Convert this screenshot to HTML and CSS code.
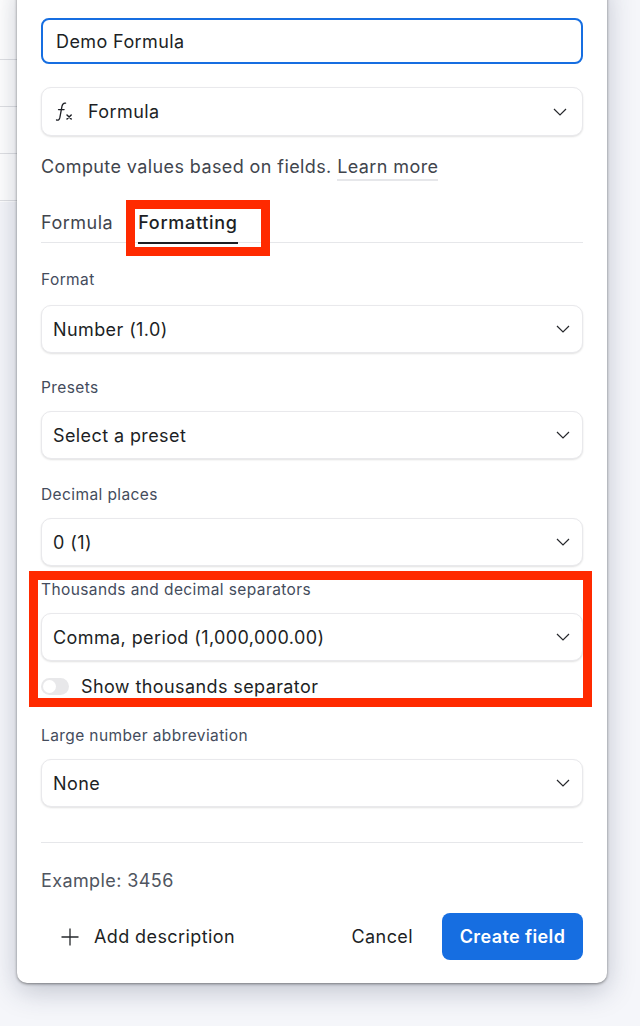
FILE: index.html
```html
<!DOCTYPE html>
<html lang="en">
<head>
<meta charset="utf-8">
<title>Create field</title>
<link rel="stylesheet" href="styles.css">
</head>
<body>
<div class="backdrop">
  <div class="bg-row"></div>
  <div class="bg-row"></div>
  <div class="bg-row"></div>
  <div class="bg-row"></div>
</div>
<div class="panel">
  <div class="name-input">Demo Formula</div>
  <div class="select type-select">
    <span class="type-label">
      <svg class="fx" width="20" height="20" viewBox="0 0 20 20" fill="none" stroke="#1d1f25" stroke-width="1.3" stroke-linecap="round"><path d="M1.5 18c2 .5 2.9-.3 3.4-2.6L7 4.2C7.6 1.6 8.8.8 10.6 1.2M3.5 7.6h5.6"/><path d="M12 13l4.2 4M16.2 13L12 17" stroke-width="1.5"/></svg>
      Formula
    </span>
    <svg class="chev" width="14" height="8" viewBox="0 0 14 8" fill="none"><path d="M1 1L7 7l6-6" stroke="#26282c" stroke-width="1.2"/></svg>
  </div>
  <p class="desc">Compute values based on fields. <span class="learn">Learn more</span></p>
  <div class="tabs">
    <span class="tab">Formula</span>
    <span class="tab active">Formatting</span>
  </div>
  <label class="label first">Format</label>
  <div class="select"><span>Number (1.0)</span><svg class="chev" width="14" height="8" viewBox="0 0 14 8" fill="none"><path d="M1 1L7 7l6-6" stroke="#26282c" stroke-width="1.2"/></svg></div>
  <label class="label presets">Presets</label>
  <div class="select"><span>Select a preset</span><svg class="chev" width="14" height="8" viewBox="0 0 14 8" fill="none"><path d="M1 1L7 7l6-6" stroke="#26282c" stroke-width="1.2"/></svg></div>
  <label class="label">Decimal places</label>
  <div class="select"><span>0 (1)</span><svg class="chev" width="14" height="8" viewBox="0 0 14 8" fill="none"><path d="M1 1L7 7l6-6" stroke="#26282c" stroke-width="1.2"/></svg></div>
  <label class="label tight">Thousands and decimal separators</label>
  <div class="select"><span>Comma, period (1,000,000.00)</span><svg class="chev" width="14" height="8" viewBox="0 0 14 8" fill="none"><path d="M1 1L7 7l6-6" stroke="#26282c" stroke-width="1.2"/></svg></div>
  <div class="toggle-row"><span class="toggle"><span class="knob"></span></span><span>Show thousands separator</span></div>
  <label class="label large">Large number abbreviation</label>
  <div class="select"><span>None</span><svg class="chev" width="14" height="8" viewBox="0 0 14 8" fill="none"><path d="M1 1L7 7l6-6" stroke="#26282c" stroke-width="1.2"/></svg></div>
  <div class="divider"></div>
  <div class="example">Example: 3456</div>
  <div class="footer">
    <span class="add">
      <svg width="18" height="18" viewBox="0 0 18 18" fill="none"><path d="M9 .5v17M.5 9h17" stroke="#26282c" stroke-width="1.3"/></svg>
      Add description
    </span>
    <span class="actions">
      <span class="cancel">Cancel</span>
      <span class="create">Create field</span>
    </span>
  </div>
</div>
<div class="mark mark-tab"></div>
<div class="mark mark-sep"></div>
</body>
</html>
```
FILE: styles.css
```css
* { box-sizing: border-box; }
html, body { margin: 0; padding: 0; }
body {
  position: relative;
  width: 640px;
  height: 1026px;
  overflow: hidden;
  background: #f5f6fa;
  font-family: Inter, "Liberation Sans", sans-serif;
  font-size: 18px;
  letter-spacing: .4px;
  color: #1d1f25;
}
.backdrop { width: 17px; padding-top: 13px; background: #fff; height: 202px; }
.bg-row { height: 47px; border-bottom: 1px solid #dfe0e3; }
.panel {
  position: absolute;
  left: 17px;
  top: -20px;
  width: 590px;
  padding: 38px 24px 23px 24px;
  background: #fff;
  border-radius: 0 0 10px 10px;
  box-shadow: 0 1px 3px rgba(0,0,0,.45), 0 8px 28px rgba(40,50,80,.26);
}
.name-input {
  height: 46px;
  padding-left: 13px;
  display: flex;
  align-items: center;
  border: 2px solid #166ee1;
  border-radius: 8px;
}
.select {
  height: 48px;
  padding: 0 12px 0 11px;
  display: flex;
  align-items: center;
  justify-content: space-between;
  background: #fff;
  border-radius: 10px;
  border: 1px solid #e9e9ec;
  box-shadow: 0 1px 2px rgba(0,0,0,.12);
}
.type-select { margin-top: 23px; height: 49px; padding-right: 15px; padding-left: 12px; }
.type-label { display: flex; align-items: center; gap: 13px; }
.fx { margin-left: 1px; }
.chev { flex: none; }
.desc { margin: 18px 0 0; height: 26px; line-height: 26px; color: #41454d; }
.learn { display: inline-block; line-height: 25px; border-bottom: 2px solid #e6e7ea; }
.tabs { display: flex; gap: 25px; margin-top: 23px; height: 40px; border-bottom: 1px solid #e6e7ea; padding-top: 7px; }
.tab { color: #41454d; height: 32px; line-height: 26px; letter-spacing: .5px; }
.tab.active { color: #1d1f25; font-weight: 500; letter-spacing: .7px; border-bottom: 2px solid #1d1f25; height: 34px; }
.label { display: block; font-size: 15.5px; line-height: 20px; color: #444c5c; margin: 26px 0 0; height: 33px; }
.label.first { margin-top: 27px; height: 35px; }
.label.presets { margin-top: 25px; }
.label.tight { margin-top: 14px; }
.label.large { margin-top: 27px; }
.toggle-row { display: flex; align-items: center; gap: 12px; height: 26px; margin-top: 12px; }
.toggle { width: 28px; height: 17px; border-radius: 9px; background: #e8e8ea; padding: 2px; display: block; }
.knob { display: block; width: 13px; height: 13px; border-radius: 50%; background: #fff; }
.divider { height: 1px; background: #e6e7ea; margin-top: 35px; }
.example { margin-top: 25px; line-height: 26px; height: 26px; color: #4f5560; }
.footer { display: flex; justify-content: space-between; align-items: center; margin-top: 19px; }
.add { display: flex; align-items: center; gap: 15px; padding-left: 20px; }
.actions { display: flex; align-items: center; gap: 29px; }
.create {
  display: flex; align-items: center; justify-content: center;
  width: 141px; height: 47px;
  background: #166ee1;
  color: #fff;
  font-weight: 600;
  border-radius: 8px;
}
.mark { position: absolute; border: 9px solid #ff2a00; }
.mark-tab { left: 126px; top: 200px; width: 144px; height: 56px; }
.mark-sep { left: 29px; top: 571px; width: 563px; height: 136px; }
```
